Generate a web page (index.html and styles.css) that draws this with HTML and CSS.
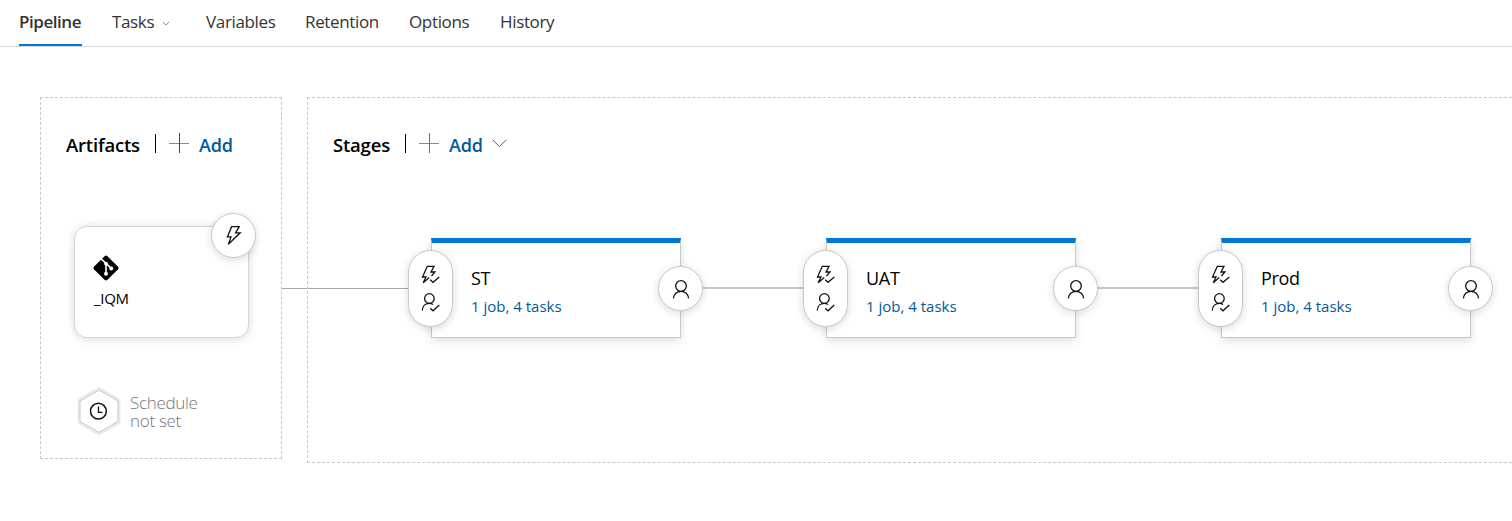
FILE: index.html
```html
<!DOCTYPE html>
<html lang="en">
<head>
<meta charset="utf-8">
<title>Release pipeline</title>
<link rel="stylesheet" href="styles.css">
</head>
<body>
<svg width="0" height="0" class="defs">
  <symbol id="bolt" viewBox="0 0 16 21"><path d="M5.6 1.7H13.2L9.6 7.8H14.2L2.4 19.2L5 11.9H1.4Z"/></symbol>
  <symbol id="checks" viewBox="0 0 20 48"><path d="M10.5 12L13.9 8H10L13 2.3H6.3L1.5 13H5L2.2 18.8L8.2 13.6M9.2 15.8L12 18.3L18.3 13M1.3 46.5C1.5 42 4.5 39.4 8.3 39.4C9.8 39.4 11 39.8 12 40.6M9.2 44.3L12 46.8L18.3 41"/><circle cx="8.4" cy="34.5" r="4.8"/></symbol>
  <symbol id="person" viewBox="0 0 18 20"><circle cx="9" cy="7" r="5.3"/><path d="M1.4 19.4C1.6 15 5 12.3 9 12.3S16.4 15 16.6 19.4"/></symbol>
</svg>
<nav class="tabs">
  <a class="tab active">Pipeline</a>
  <a class="tab tasks">Tasks<svg width="8" height="5" viewBox="0 0 8 5"><path d="M.8 .8L4 4L7.2 .8"/></svg></a>
  <a class="tab variables">Variables</a>
  <a class="tab retention">Retention</a>
  <a class="tab options">Options</a>
  <a class="tab">History</a>
</nav>
<main class="canvas">
  <section class="panel artifacts">
    <header class="head">
      <h2 class="head-a">Artifacts</h2><i class="bar"></i>
      <svg class="plus" width="20" height="20"><path class="ph" d="M0 10.5H20"/><path class="pv" d="M10.5 0V20"/></svg>
      <a class="add">Add</a>
    </header>
    <div class="artifact">
      <svg width="26" height="26" viewBox="0 0 26 26"><path d="M11.8 .9Q13 0 14.2 .9L25.1 11.8Q26 13 25.1 14.2L14.2 25.1Q13 26 11.8 25.1L.9 14.2Q0 13 .9 11.8Z"/><path class="git" d="M8 3.6L13 8.5V18.5M13.2 8.6L18.5 13.5"/><circle class="dot" cx="13" cy="8.7" r="1.9"/><circle class="dot" cx="13" cy="18.8" r="2"/><circle class="dot" cx="18.3" cy="13.4" r="2"/></svg>
      <span class="name">_IQM</span>
      <span class="round trigger"><svg width="16" height="21"><use href="#bolt"/></svg></span>
    </div>
    <div class="schedule">
      <svg width="46" height="50" viewBox="0 0 46 50"><path class="hex-out" d="M23 2.3L43 13.8V36.6L23 48.1L3 36.6V13.8Z"/><path class="hex-in" d="M23 4L42 15V35.5L23 46.4L4 35.5V15Z"/><circle cx="22.4" cy="25.2" r="7.9"/><path d="M22.5 20.5V26.3H26.5"/></svg>
      <span class="sched-text">Schedule<br>not set</span>
    </div>
  </section>
  <i class="link entry"></i>
  <section class="panel stages">
    <header class="head">
      <h2 class="head-s">Stages</h2><i class="bar"></i>
      <svg class="plus" width="20" height="20"><path class="ph" d="M0 10.5H20"/><path class="pv bright" d="M10.5 0V20"/></svg>
      <a class="add">Add</a>
      <svg class="drop" width="15" height="9"><path d="M.6 .8L7.5 7.6L14.4 .8"/></svg>
    </header>
    <div class="flow">
      <i class="link first"></i>
      <article class="stage"><span class="pill"><svg width="20" height="48"><use href="#checks"/></svg></span><h3>ST</h3><a class="jobs">1 job, 4 tasks</a><span class="round post"><svg width="18" height="20"><use href="#person"/></svg></span></article>
      <i class="link"></i>
      <article class="stage"><span class="pill"><svg width="20" height="48"><use href="#checks"/></svg></span><h3>UAT</h3><a class="jobs">1 job, 4 tasks</a><span class="round post"><svg width="18" height="20"><use href="#person"/></svg></span></article>
      <i class="link"></i>
      <article class="stage"><span class="pill"><svg width="20" height="48"><use href="#checks"/></svg></span><h3>Prod</h3><a class="jobs">1 job, 4 tasks</a><span class="round post"><svg width="18" height="20"><use href="#person"/></svg></span></article>
    </div>
  </section>
</main>
</body>
</html>
```
FILE: styles.css
```css
* { box-sizing: border-box; }
body { margin: 0; background: #fff; color: #000; font-family: "Open Sans", "Noto Sans", sans-serif; height: 521px; overflow: hidden; }
svg { display: block; fill: none; stroke: #111; stroke-width: 1.3; flex: none; }
.defs { position: absolute; }
h2, h3 { margin: 0; }
.tabs { display: flex; height: 47px; padding-left: 19px; border-bottom: 1px solid #d6d6d6; }
.tab { height: 46px; line-height: 43px; font-size: 17px; letter-spacing: -.35px; color: #333; white-space: nowrap; }
.active { width: 63px; margin-right: 30px; font-weight: 600; letter-spacing: -.45px; border-bottom: 2px solid #0078d4; }
.tasks { width: 94px; display: flex; }
.tasks svg { margin: 21px 0 0 8px; stroke: #888; stroke-width: 1; }
.variables { width: 99px; }
.retention { width: 104px; }
.options { width: 91px; }
.canvas { display: flex; align-items: flex-start; padding: 50px 0 0 40px; }
.panel { border: 1px dashed #c8c8c8; flex: none; }
.artifacts { width: 242px; height: 362px; padding: 36px 0 0 25px; }
.stages { width: 1230px; height: 366px; padding: 36px 0 0 25px; }
.head { display: flex; height: 20px; align-items: flex-start; white-space: nowrap; }
.head h2, .add { font-size: 18px; font-weight: 600; line-height: 22px; letter-spacing: -.2px; }
.head h2 { font-size: 18.5px; }
.head-a { width: 89px; }
.head-s { width: 72px; }
.bar { width: 1px; height: 19px; margin-right: 13px; background: #000; }
.plus { margin: -1px 10px 0 0; stroke-width: 1; }
.plus .ph { stroke: #6590bd; }
.plus .pv { stroke: #0058ad; }
.plus .bright { stroke: #0090df; }
.add { width: 33px; color: #005a9e; }
.drop { margin: 5px 0 0 10px; stroke: #266ca7; stroke-width: 1; }
.artifact { position: relative; display: flex; flex-direction: column; width: 175px; height: 112px; margin: 72px 0 0 8px; padding: 28px 0 0 18px; border: 1px solid #d6d6d6; border-radius: 13px; background: #fff; box-shadow: 0 1px 10px rgba(0,0,0,.15); }
.artifact > svg { fill: #000; stroke: none; }
.artifact .git { fill: none; stroke: #fff; stroke-width: 1.6; }
.artifact .dot { fill: #fff; }
.name { font-size: 15px; line-height: 20px; letter-spacing: -.3px; margin: 7px 0 0 1px; }
.round { position: absolute; display: flex; align-items: center; justify-content: center; width: 45px; height: 45px; border: 1px solid #c8c8c8; border-radius: 50%; background: #fff; box-shadow: 0 2px 8px rgba(0,0,0,.14); }
.trigger { left: 136px; top: -14px; }
.schedule { display: flex; margin: 48px 0 0 10px; }
.schedule svg circle { stroke-width: 1.5; }
.schedule .hex-out { stroke: #ebebeb; stroke-width: 3; }
.schedule .hex-in { stroke: #c6c6c6; stroke-width: 1; fill: #fff; }
.sched-text { margin: 8px 0 0 8px; font-size: 17px; line-height: 18px; letter-spacing: -.3px; color: #767676; white-space: nowrap; font-weight: 300; }
.link { flex: none; width: 145px; height: 2px; background: #c8c8c8; }
.entry { width: 25px; margin-top: 191px; height: 1px; background: #aaa; }
.flow { display: flex; align-items: flex-start; margin: 84px 0 0 -25px; }
.flow .link { margin-top: 49px; }
.flow .first { width: 123px; height: 1px; margin-top: 50px; background: #aaa; }
.stage { position: relative; flex: none; width: 250px; height: 100px; padding: 23px 0 0 39px; border: 1px solid #c8c8c8; border-top: 5px solid #0078d4; background: #fff; box-shadow: 0 3px 9px rgba(0,0,0,.13); }
.stage h3 { font-size: 18px; font-weight: 400; line-height: 24px; letter-spacing: -.3px; }
.jobs { display: block; font-size: 15px; line-height: 20px; margin-top: 6px; color: #005a9e; }
.pill { position: absolute; z-index: 1; left: -24px; top: 7px; width: 45px; height: 77px; padding: 13px 0 0 12px; border: 1px solid #c8c8c8; border-radius: 23px; background: #fff; box-shadow: 0 2px 9px rgba(0,0,0,.15); }
.post { left: 226px; top: 23px; }
```
